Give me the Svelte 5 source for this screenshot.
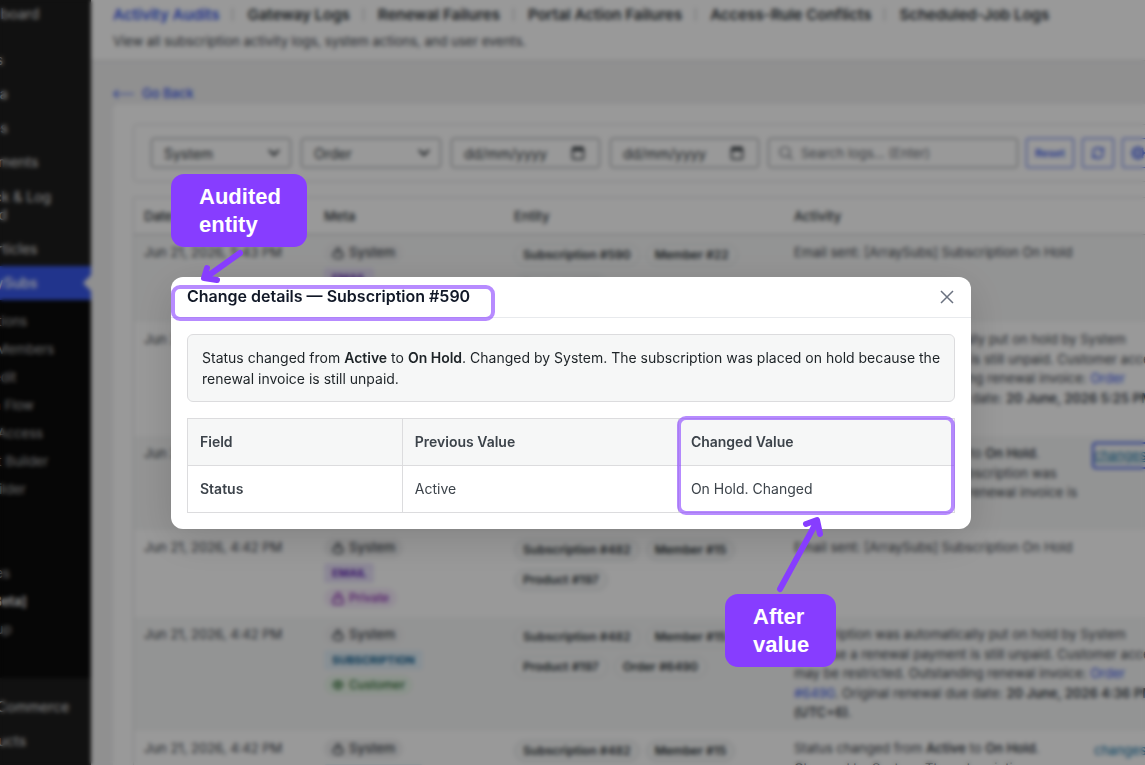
<script>
  const topMenu = ['Dashboard'];
  const contentMenu = ['Posts', 'Media', 'Pages', 'Comments'];
  const subMenu = ['Subscriptions', 'Manage Members', 'Store Credit', 'Retention Flow', 'Member Access', 'Checkout Builder', 'Fields Builder'];

  const tabs = ['Activity Audits', 'Gateway Logs', 'Renewal Failures', 'Portal Action Failures', 'Access-Rule Conflicts', 'Scheduled-Job Logs'];

  const rows = [
    { date: 'Jun 21, 2026, 5:43 PM', type: 'email', entities: ['Subscription #590', 'Member #22', 'Product #197'], activity: 'email' },
    { date: 'Jun 21, 2026, 5:43 PM', type: 'subscription', entities: ['Subscription #590', 'Member #22', 'Product #197', 'Order #6508'], activity: 'hold', order: '#6508', due: '20 June, 2026 5:25 PM' },
    { date: 'Jun 21, 2026, 5:43 PM', type: 'subscription', entities: ['Subscription #590', 'Member #22', 'Product #197'], activity: 'status', focused: true },
    { date: 'Jun 21, 2026, 4:42 PM', type: 'email', entities: ['Subscription #482', 'Member #15', 'Product #197'], activity: 'email' },
    { date: 'Jun 21, 2026, 4:42 PM', type: 'subscription', entities: ['Subscription #482', 'Member #15', 'Product #197', 'Order #6490'], activity: 'hold', order: '#6490', due: '20 June, 2026 4:36 PM' },
    { date: 'Jun 21, 2026, 4:42 PM', type: 'subscription', entities: ['Subscription #482', 'Member #15', 'Product #197'], activity: 'status' }
  ];
</script>

<div class="shell">
  <aside class="sidebar">
    <nav aria-label="Admin menu">
      {#each topMenu as item}<a href="#menu">{item}</a>{/each}
      <div class="sep"></div>
      {#each contentMenu as item}<a href="#menu">{item}</a>{/each}
      <a href="#menu" class="two">Check &amp; Log<br />Guard</a>
      <a href="#menu">All Articles</a>
      <a href="#menu" class="current">ArraySubs</a>
      <div class="sub">
        {#each subMenu as item}<a href="#menu">{item}</a>{/each}
        <div class="hold"></div>
        <a href="#menu">Categories</a>
        <a href="#menu" class="strong">Toolkit [Beta]</a>
        <a href="#menu">Easy Setup</a>
        <div class="tail"></div>
      </div>
      <div class="sep"></div>
      <a href="#menu">WooCommerce</a>
      <a href="#menu">Products</a>
    </nav>
  </aside>

  <main>
    <header class="top">
      <nav class="tabs" aria-label="Log types">
        {#each tabs as tab, i}
          {#if i > 0}<span class="bar"></span>{/if}
          <a href="#tab" class:on={i === 0}>{tab}</a>
        {/each}
      </nav>
      <p>View all subscription activity logs, system actions, and user events.</p>
    </header>

    <a class="back" href="#back">
      <svg width="22" height="10" viewBox="0 0 22 10" fill="none" stroke="currentColor" stroke-width="1.2"><path d="M5 1 1 5l4 4M1 5h20" /></svg>
      Go Back
    </a>

    <section class="card">
      <form class="filters" onsubmit={(e) => e.preventDefault()}>
        {#each ['System', 'Order'] as name}
          <label class="field pick">
            <select aria-label={name}><option>{name}</option></select>
            <svg width="12" height="8" viewBox="0 0 12 8" fill="none" stroke="currentColor" stroke-width="2"><path d="m1 1 5 5 5-5" /></svg>
          </label>
        {/each}
        {#each ['From', 'To'] as name}
          <label class="field date">
            <input type="text" aria-label={name} placeholder="dd/mm/yyyy" />
            <svg width="14" height="14" viewBox="0 0 14 14" fill="none" stroke="currentColor" stroke-width="1.5"><rect x="1.500" y="2" width="11" height="11" rx="1" /><path d="M1.500 3.500h11" stroke-width="3" /><path d="M4 0v2M10 0v2" /></svg>
          </label>
        {/each}
        <label class="field search">
          <svg width="14" height="14" viewBox="0 0 14 14" fill="none" stroke="currentColor" stroke-width="1.2"><circle cx="6" cy="6" r="5" /><path d="m10 10 3.500 3.500" /></svg>
          <input type="text" aria-label="Search logs" placeholder="Search logs... (Enter)" />
        </label>
        <button type="button" class="reset">Reset</button>
        <button type="button" class="square" aria-label="Refresh">
          <svg width="14" height="14" viewBox="0 0 24 24" fill="none" stroke="currentColor" stroke-width="2.500"><path d="M3 12a9 9 0 0 1 15-6.700L21 8M21 3v5h-5M21 12a9 9 0 0 1-15 6.700L3 16M3 21v-5h5" /></svg>
        </button>
        <button type="button" class="square" aria-label="Settings">
          <svg width="14" height="14" viewBox="0 0 14 14" fill="none" stroke="currentColor"><circle cx="7" cy="7" r="5" stroke-width="2" /><circle cx="7" cy="7" r="2" stroke-width="1.200" /><path d="M7 0v2M7 12v2M0 7h2M12 7h2M2 2l1.500 1.500M10.500 10.500 12 12M12 2l-1.500 1.500M3.500 10.500 2 12" stroke-width="1.500" /></svg>
        </button>
      </form>

      <table class="logs">
        <thead>
          <tr><th class="c1">Date</th><th class="c2">Meta</th><th class="c3">Entity</th><th class="c4">Activity</th></tr>
        </thead>
        <tbody>
          {#each rows as row}
            <tr class={row.activity}>
              <td>{row.date}</td>
              <td>
                <div class="meta">
                  <span class="chip system">
                    <svg width="12" height="12" viewBox="0 0 12 12" fill="none" stroke="currentColor" stroke-width="1.3"><rect x="1" y="5" width="10" height="6" rx="3" /><path d="M4 5V3a2 2 0 0 1 4 0v2" /></svg>
                    System
                  </span>
                  <span class="tag type-{row.type}">{row.type}</span>
                  {#if row.type === 'email'}
                    <span class="chip private">
                      <svg width="12" height="13" viewBox="0 0 12 13" fill="none" stroke="currentColor" stroke-width="1.400"><rect x="1" y="6" width="10" height="6" rx="1" /><path d="M3.500 6V3.500a2.500 2.500 0 0 1 5 0V6" /></svg>
                      Private
                    </span>
                  {:else}
                    <span class="chip customer">
                      <svg width="12" height="12" viewBox="0 0 12 12" fill="none" stroke="currentColor" stroke-width="1.300"><path d="M1 6c2-5 8-5 10 0-2 5-8 5-10 0Z" /><circle cx="6" cy="6" r="1.500" /></svg>
                      Customer
                    </span>
                  {/if}
                </div>
              </td>
              <td>
                <div class="pills">
                  {#each row.entities as entity}<a href="#entity">{entity}</a>{/each}
                </div>
              </td>
              <td>
                {#if row.activity === 'email'}
                  Email sent: [ArraySubs] Subscription On Hold
                {:else if row.activity === 'hold'}
                  Subscription was automatically put on hold by System because a renewal payment is still unpaid. Customer access may be restricted. Outstanding renewal invoice: <a href="#order">Order {row.order}</a>. Original renewal due date: <b>{row.due} (UTC+6)</b>.
                {:else}
                  <div class="change">
                    <span>Status changed from <b>Active</b> to <b>On Hold</b>. Changed by System. The subscription was placed on hold because the renewal invoice is still unpaid.</span>
                    <a href="#changes" class:focused={row.focused}>changes</a>
                  </div>
                {/if}
              </td>
            </tr>
          {/each}
        </tbody>
      </table>
    </section>
  </main>
</div>

<div class="overlay">
  <div class="stage">
    <div class="modal" role="dialog" aria-modal="true" aria-labelledby="modal-title">
      <div class="modal-head">
        <h2 id="modal-title">Change details — Subscription #590</h2>
        <button type="button" aria-label="Close">
          <svg width="14" height="14" viewBox="0 0 14 14" fill="none" stroke="currentColor" stroke-width="1.500"><path d="m1 1 12 12M13 1 1 13" /></svg>
        </button>
      </div>
      <div class="modal-body">
        <p>Status changed from <b>Active</b> to <b>On Hold</b>. Changed by System. The subscription was placed on hold because the renewal invoice is still unpaid.</p>
        <table class="diff">
          <thead>
            <tr><th>Field</th><th>Previous Value</th><th>Changed Value</th></tr>
          </thead>
          <tbody>
            <tr><th scope="row">Status</th><td>Active</td><td>On Hold. Changed</td></tr>
          </tbody>
        </table>
      </div>
    </div>

    <div class="ring title-ring"></div>
    <div class="ring value-ring"></div>
    <div class="callout audited">Audited<br />entity</div>
    <div class="callout after">After<br />value</div>
    <svg class="arrow arrow-down" width="50" height="42" viewBox="0 0 50 42"><path d="M45 6 10 31M12 21 9 31l13 2" /></svg>
    <svg class="arrow arrow-up" width="60" height="84" viewBox="0 0 60 84"><path d="M10 78 46 12M36 13l11-4 3 14" /></svg>
  </div>
</div>

<style>
  :global(body) { margin: 0; overflow: hidden; font-family: Inter, sans-serif; font-size: 13px; color: #3c434a; }
  * { box-sizing: border-box; }
  a { color: inherit; text-decoration: none; }
  b { font-weight: 600; }
  button, input, select { font: inherit; color: inherit; }
  svg { flex: none; }

  .shell { display: flex; height: 100vh; overflow: hidden; background: #f0f0f1; }
  .sidebar { flex: none; width: 160px; margin-left: -69px; background: #1d1d1d; color: #e4e4e4; font-size: 14px; line-height: 18px; }
  .sidebar nav { margin-top: -3px; }
  .sidebar a { display: block; padding: 8px 8px 8px 36px; white-space: nowrap; }
  .sidebar .two { padding: 9px 8px 8px 36px; }
  .sep { height: 12px; }
  .sidebar a.current { position: relative; background: #3858e9; color: #fff; font-weight: 500; }
  .current::after { content: ''; position: absolute; right: 0; top: 9px; border: 8px solid transparent; border-right-color: #f0f0f1; border-left: 0; }
  .sub { padding: 7px 0; background: #0a0a0a; color: #b5b5b5; font-size: 13px; }
  .sidebar .sub a { padding: 5px 12px; }
  .hold { height: 56px; }
  .tail { height: 28px; }
  .sidebar .strong { color: #fff; font-weight: 600; }

  main { flex: 1; min-width: 0; }
  .top { height: 61px; padding: 4px 22px; background: #fff; border-bottom: 1px solid #dcdcde; }
  .tabs { display: flex; align-items: center; line-height: 21px; font-size: 15px; font-weight: 600; color: #2c3338; white-space: nowrap; }
  .tabs .on { color: #3858e9; }
  .bar { width: 1px; height: 13px; margin: 0 14px 0 13px; background: #b4b8bd; }
  .top p { margin: 6px 0 0; line-height: 20px; }
  .back { display: flex; align-items: center; gap: 7px; width: max-content; margin: 22px 22px 0; line-height: 21px; color: #3858e9; font-weight: 500; }

  .card { width: max-content; min-width: 100%; margin-left: 22px; padding: 20px; background: #fff; border-radius: 6px; }
  .filters { display: flex; gap: 10px; padding: 13px 17px; border: 1px solid #dcdcde; border-radius: 4px; }
  .field { display: flex; align-items: center; height: 30px; border: 1px solid #8c8f94; border-radius: 3px; padding: 0 12px; gap: 8px; font-size: 14px; color: #2c3338; }
  .field svg { pointer-events: none; }
  .field select, .field input { flex: 1; min-width: 0; width: 100%; border: 0; padding: 0; background: none; appearance: none; outline: none; }
  .pick { width: 140px; padding-right: 10px; }
  .date { width: 149px; padding-right: 14px; }
  .date input::placeholder { color: #2c3338; opacity: 1; }
  .search { width: 250px; margin-left: -1px; padding: 0 10px; font-size: 13px; color: #646970; }
  .search input::placeholder { color: #646970; opacity: 1; }
  .filters button { display: flex; align-items: center; justify-content: center; height: 30px; margin-left: -2px; padding: 0; border: 1px solid #3858e9; border-radius: 2px; background: #fff; color: #3858e9; }
  .filters .reset { width: 48px; font-size: 11px; font-weight: 600; }
  .filters .square { width: 32px; }

  .logs { width: 1046px; margin-top: 15px; border-collapse: separate; border-spacing: 0; table-layout: fixed; border: 1px solid #dcdcde; line-height: 20px; }
  .logs th { height: 37px; padding: 0 10px; text-align: left; font-size: 13px; font-weight: 500; color: #2c3338; border-bottom: 1px solid #c3c4c7; }
  .logs td { height: 87px; padding: 8px 10px; vertical-align: top; line-height: 1.5; }
  .logs tbody tr:nth-child(odd) td { background: #f6f7f7; }
  .logs .status td { height: 93px; }
  .logs .hold td { height: 114px; }
  .logs td > a { color: #3858e9; }
  .c1 { width: 180px; }
  .c2 { width: 190px; }
  .c3 { width: 280px; }
  .meta { display: flex; flex-direction: column; align-items: flex-start; gap: 5px; }
  .chip, .tag { display: flex; align-items: center; gap: 5px; height: 20px; padding: 0 8px; border-radius: 10px; font-weight: 500; }
  .system { background: #f0f0f1; }
  .private { background: #f6ecfb; color: #8a2bb0; font-size: 12px; }
  .customer { background: #e8f5e9; color: #2e6b32; font-size: 12px; }
  .tag { border-radius: 3px; font-size: 11px; font-weight: 700; text-transform: uppercase; }
  .type-email { background: #e9e2fa; color: #6427b5; }
  .type-subscription { background: #e3f0f8; color: #0f5f8f; }
  .pills { display: flex; flex-wrap: wrap; gap: 8px 6px; padding-top: 1px; }
  .pills a { height: 22px; padding: 0 8px; border: 1px solid #dcdfe2; border-radius: 11px; background: #f6f7f7; line-height: 20px; font-size: 12px; font-weight: 600; color: #2c3338; }
  .change { display: flex; align-items: flex-start; gap: 10px; }
  .change span { flex: none; width: 290px; }
  .change a { padding: 2px 0; color: #0a6fa5; line-height: 19px; }
  .change .focused { outline: 2px solid #3858e9; border-radius: 2px; text-decoration: underline; }

  .overlay { position: fixed; inset: 0; display: flex; align-items: center; justify-content: center; padding: 41px 3px 0 0; background: rgba(0, 0, 0, 0.4); backdrop-filter: blur(2px); }
  .stage { position: relative; width: 800px; max-width: calc(100% - 32px); }
  .modal { overflow: hidden; border-radius: 12px; background: #fff; color: #1d2327; box-shadow: 0 10px 40px rgba(0, 0, 0, 0.15); }
  .modal-head { display: flex; align-items: center; justify-content: space-between; height: 41px; padding: 0 16px; border-bottom: 1px solid #e8eaed; }
  h2 { margin: 0; padding-bottom: 2px; font-size: 16px; line-height: 24px; font-weight: 600; color: #111827; }
  .modal-head button { display: flex; padding: 1px; border: 0; background: none; color: #6b7280; }
  .modal-body { display: flex; flex-direction: column; gap: 16px; padding: 16px; font-size: 14px; }
  .modal-body p { margin: 0; padding: 12px 4px 12px 14px; border: 1px solid #dcdcde; border-radius: 6px; background: #f6f7f7; line-height: 21px; }
  .diff { width: 100%; border-collapse: collapse; table-layout: fixed; color: #3c434a; }
  .diff th, .diff td { height: 47px; padding: 0 12px; border: 1px solid #dcdcde; text-align: left; line-height: 20px; }
  .diff th { font-weight: 600; }
  .diff thead th { background: #f6f7f7; }
  .diff th:first-child { width: 28%; }

  .ring { position: absolute; border: 4px solid rgba(135, 61, 255, 0.6); border-radius: 9px; }
  .title-ring { left: 0; top: 8px; width: 324px; height: 36px; }
  .value-ring { right: 16px; bottom: 14px; width: 278px; height: 99px; }
  .callout { position: absolute; padding: 9px 28px 8px; border-radius: 13px; background: #873dff; color: #fff; font: bold 22px/28px "Liberation Sans", Arial, sans-serif; }
  .audited { left: 0; top: -103px; width: 136px; }
  .after { left: 554px; top: 317px; width: 111px; }
  .arrow { position: absolute; fill: none; stroke: #873dff; stroke-width: 6; stroke-linecap: round; stroke-linejoin: round; }
  .arrow-down { left: 24px; top: -30px; }
  .arrow-up { left: 599px; top: 234px; }
</style>
